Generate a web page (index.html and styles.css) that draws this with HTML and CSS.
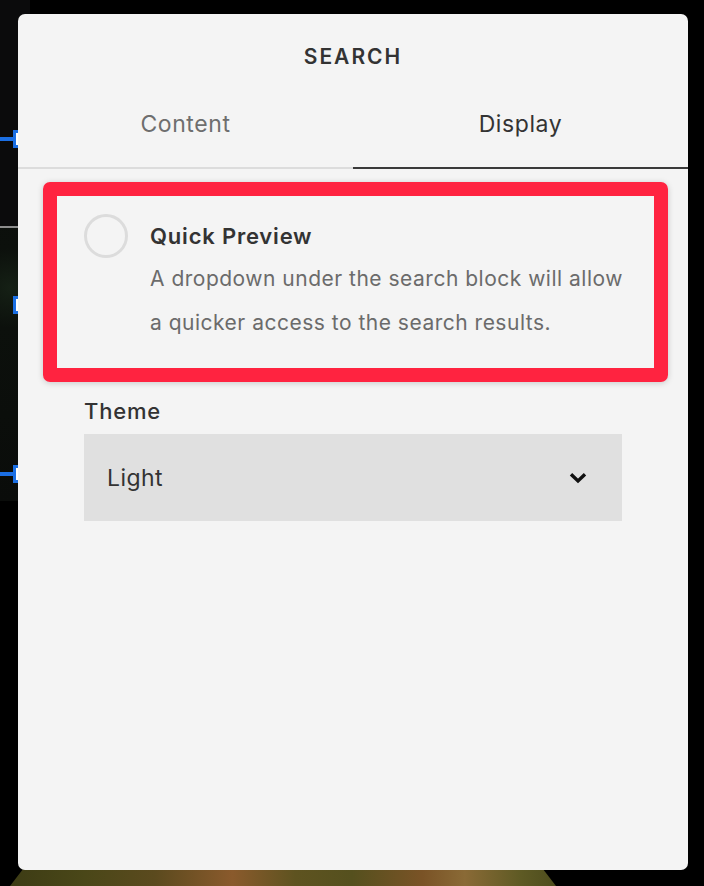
FILE: index.html
```html
<!DOCTYPE html>
<html lang="en">
<head>
<meta charset="utf-8">
<title>Search block settings</title>
<link rel="stylesheet" href="styles.css">
</head>
<body>
  <div class="backdrop">
    <div class="page-top"></div>
    <div class="page-rule"></div>
    <div class="page-image"></div>
    <div class="handle handle-a"><span class="handle-line"></span><span class="handle-box"></span></div>
    <div class="handle handle-b"><span class="handle-box"></span></div>
    <div class="handle handle-c"><span class="handle-line"></span><span class="handle-box"></span></div>
    <div class="bottom-image"></div>
  </div>

  <section class="panel">
    <h1 class="panel-title">SEARCH</h1>
    <nav class="tabs">
      <div class="tab">Content</div>
      <div class="tab tab-active">Display</div>
    </nav>

    <div class="highlight">
      <div class="option">
        <span class="radio"></span>
        <div class="option-text">
          <div class="option-title">Quick Preview</div>
          <p class="option-desc">A dropdown under the search block will allow a quicker access to the search results.</p>
        </div>
      </div>
    </div>

    <div class="field">
      <div class="field-label">Theme</div>
      <div class="select">
        <span class="select-value">Light</span>
        <svg class="chevron" width="18" height="12" viewBox="0 0 18 12" aria-hidden="true">
          <path d="M2 2.2 L9 9 L16 2.2" fill="none" stroke="#111" stroke-width="3.4" stroke-linejoin="miter" stroke-linecap="butt"/>
        </svg>
      </div>
    </div>
  </section>
</body>
</html>
```

FILE: styles.css
```css
* { box-sizing: border-box; }

html, body {
  margin: 0;
  height: 100%;
}

body {
  background: #000;
  overflow: hidden;
  padding: 14px 0 0 18px;
  font-family: "Inter", "Liberation Sans", sans-serif;
  position: relative;
}

/* ---- page behind the panel ---- */
.backdrop {
  position: absolute;
  inset: 0;
  z-index: 0;
}
.page-top {
  position: absolute;
  left: 0; top: 0;
  width: 30px; height: 226px;
  background: #0b0b0c;
}
.page-rule {
  position: absolute;
  left: 0; top: 226px;
  width: 30px; height: 2px;
  background: #8c8c8c;
}
.page-image {
  position: absolute;
  left: 0; top: 228px;
  width: 30px; height: 273px;
  background: radial-gradient(circle at 10px 60px, #152015 0, #0c100c 40px, #0a0c0a 100%);
}
.handle {
  position: absolute;
  left: 0;
  height: 18px;
  width: 30px;
}
.handle-line {
  position: absolute;
  left: 0;
  top: 7px;
  width: 14px;
  height: 4px;
  background: #1b6fe4;
}
.handle-box {
  position: absolute;
  left: 13px;
  top: 0;
  width: 12px;
  height: 18px;
  border: 3px solid #1b6fe4;
  background: #fff;
}
.handle-a { top: 130px; }
.handle-b { top: 296px; }
.handle-c { top: 465px; }

.bottom-image {
  position: absolute;
  left: 0;
  top: 860px;
  width: 704px;
  height: 26px;
  background: linear-gradient(90deg, #3b3a14 0%, #4a4718 12%, #5b4a1e 22%, #8a5a2c 33%, #5e5320 42%, #55501e 50%, #7a5326 60%, #8a6a36 66%, #5e5a24 74%, #4a4a1c 80%);
  clip-path: polygon(30px 0, 536px 0, 556px 26px, 10px 26px);
}

/* ---- panel ---- */
.panel {
  position: relative;
  z-index: 1;
  width: 670px;
  height: 856px;
  background: #f4f4f4;
  border-radius: 7px;
  overflow: hidden;
}

.panel-title {
  margin: 0;
  padding-top: 31px;
  text-align: center;
  font-size: 21px;
  line-height: 24px;
  font-weight: 600;
  letter-spacing: 2px;
  color: #333;
}

.tabs {
  display: grid;
  grid-template-columns: 335px 335px;
  margin-top: 42px;
}
.tab {
  text-align: center;
  font-size: 23px;
  line-height: 26px;
  padding-bottom: 30px;
  color: #6e6e6e;
  border-bottom: 2px solid #dcdcdc;
  letter-spacing: 0.6px;
}
.tab-active {
  color: #333;
  border-bottom-color: #3a3a3a;
}

.highlight {
  margin: 13px 20px 0 25px;
  border: 14px solid #ff2340;
  border-radius: 7px;
  box-shadow: 0 1px 6px rgba(0,0,0,0.18);
  padding: 18px 20px 23px 27px;
}

.option {
  display: flex;
  align-items: flex-start;
  gap: 22px;
}
.radio {
  flex: none;
  width: 44px;
  height: 44px;
  border: 3px solid #dcdcdc;
  border-radius: 50%;
}
.option-text {
  padding-top: 8px;
}
.option-title {
  font-size: 22px;
  line-height: 28px;
  font-weight: 600;
  color: #333;
  letter-spacing: 0.8px;
}
.option-desc {
  margin: 7px 0 0;
  font-size: 21px;
  line-height: 44px;
  color: #6b6b6b;
  letter-spacing: 0.5px;
}

.field {
  margin: 17px 66px 0 66px;
}
.field-label {
  font-size: 22px;
  line-height: 24px;
  font-weight: 500;
  color: #333;
  letter-spacing: 0.8px;
}
.select {
  margin-top: 11px;
  height: 87px;
  background: #e0e0e0;
  display: flex;
  align-items: center;
  justify-content: space-between;
  padding: 0 35px 0 23px;
}
.select-value {
  font-size: 23px;
  color: #333;
  letter-spacing: 0.4px;
}
.chevron {
  display: block;
}
```
